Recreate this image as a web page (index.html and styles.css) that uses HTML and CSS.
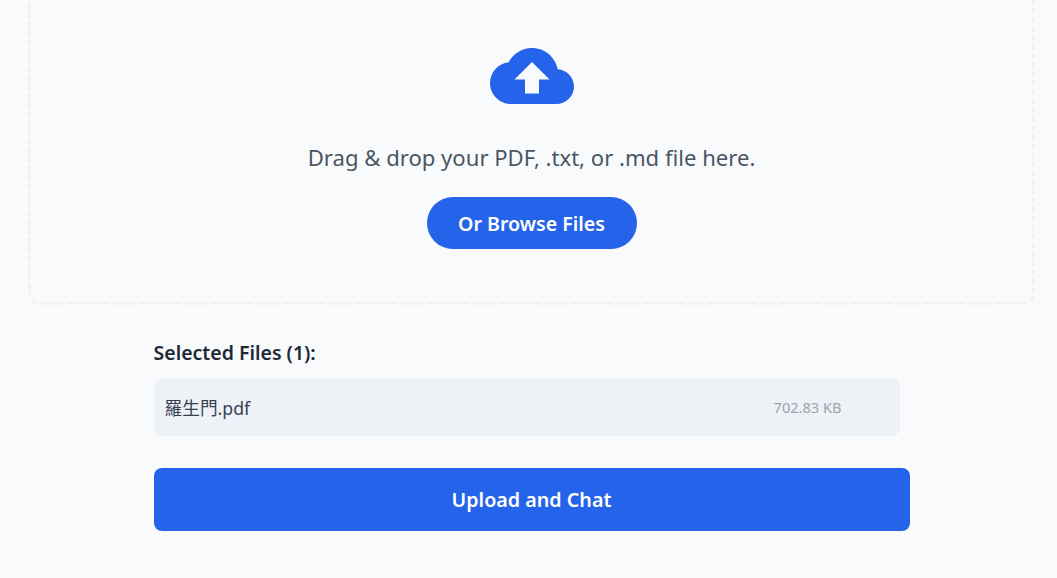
FILE: index.html
```html
<!DOCTYPE html>
<html lang="en">
<head>
<meta charset="utf-8">
<title>Upload</title>
<link rel="stylesheet" href="styles.css">
</head>
<body>
<main class="page">
  <section class="dropzone">
    <svg class="cloud" viewBox="0 0 24 24" aria-hidden="true"><path d="M19.35 10.04C18.67 6.59 15.64 4 12 4 9.11 4 6.6 5.64 5.35 8.04 2.34 8.36 0 10.91 0 14c0 3.31 2.69 6 6 6h13c2.76 0 5-2.24 5-5 0-2.64-2.05-4.78-4.65-4.96zM14 13v4h-4v-4H7l5-5 5 5h-3z"/></svg>
    <p class="hint">Drag &amp; drop your PDF, .txt, or .md file here.</p>
    <button class="browse" type="button">Or Browse Files</button>
  </section>
  <section class="files">
    <h3 class="files-title">Selected Files (1):</h3>
    <div class="file-row">
      <span class="file-name">羅生門.pdf</span>
      <span class="file-size">702.83 KB</span>
    </div>
    <button class="upload" type="button">Upload and Chat</button>
  </section>
</main>
</body>
</html>
```
FILE: styles.css
```css
html, body {
  margin: 0;
  height: 100%;
  overflow: hidden;
  background: #f9fafc;
}
body {
  font-family: "Noto Sans", "Noto Sans CJK TC", sans-serif;
  color: #1f2937;
}
.page {
  display: flex;
  flex-direction: column;
  align-items: center;
  margin-top: -40px;
}
.dropzone {
  box-sizing: border-box;
  width: 1007px;
  height: 345px;
  margin-left: 6px;
  padding-top: 71px;
  border: 3px dashed #f0f2f6;
  border-radius: 12px;
  display: flex;
  flex-direction: column;
  align-items: center;
}
.cloud {
  width: 84px;
  height: 84px;
  fill: #2563eb;
  flex: none;
}
.hint {
  margin: 21px 0 0;
  font-size: 22.1px;
  line-height: 36px;
  color: #4b5563;
}
.browse {
  margin-top: 22px;
  width: 210px;
  height: 52px;
  border: 0;
  border-radius: 26px;
  background: #2563eb;
  color: #fff;
  font: 600 19.6px "Noto Sans", sans-serif;
}
.files {
  width: 756px;
  margin-top: 34px;
  margin-left: 6px;
}
.files-title {
  margin: 0 0 11px;
  font-size: 19.5px;
  line-height: 28px;
  font-weight: 600;
}
.file-row {
  box-sizing: border-box;
  width: 746px;
  height: 58px;
  padding: 0 58px 0 11px;
  border-radius: 8px;
  background: #eef1f5;
  display: flex;
  align-items: center;
  justify-content: space-between;
}
.file-name {
  font-size: 17.7px;
  color: #374151;
}
.file-size {
  font-size: 14.6px;
  color: #9ca3af;
}
.upload {
  display: block;
  margin-top: 32px;
  width: 756px;
  height: 63px;
  border: 0;
  border-radius: 8px;
  background: #2563eb;
  color: #fff;
  font: 600 19.7px "Noto Sans", sans-serif;
}
```
